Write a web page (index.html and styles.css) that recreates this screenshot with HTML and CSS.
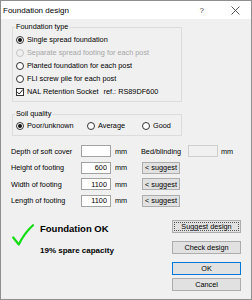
FILE: index.html
```html
<!DOCTYPE html>
<html lang="en">
<head>
  <meta charset="UTF-8">
  <title>Foundation design</title>
  <link rel="stylesheet" href="styles.css">
</head>
<body>
  <div class="window">
    <div class="titlebar">
      <span class="title">Foundation design</span>
      <span class="help">?</span>
      <svg class="close" width="9" height="9" viewBox="0 0 9 9">
        <path d="M0.5 0.5 L8.5 8.5 M8.5 0.5 L0.5 8.5" stroke="#444" stroke-width="0.9" fill="none"/>
      </svg>
    </div>

    <fieldset class="group type-group">
      <legend>Foundation type</legend>
      <label class="opt"><span class="radio checked"></span>Single spread foundation</label>
      <label class="opt disabled"><span class="radio"></span>Separate spread footing for each post</label>
      <label class="opt"><span class="radio"></span>Planted foundation for each post</label>
      <label class="opt"><span class="radio"></span>FLI screw pile for each post</label>
      <label class="opt"><span class="check"><svg width="8" height="8" viewBox="0 0 8 8"><path d="M1.2 4 L3.2 6 L6.8 1.6" stroke="#222" stroke-width="1" fill="none"/></svg></span>NAL Retention Socket<span class="ref">ref.: RS89DF600</span></label>
    </fieldset>

    <fieldset class="group soil-group">
      <legend>Soil quality</legend>
      <div class="soil-row">
        <label class="opt"><span class="radio checked"></span>Poor/unknown</label>
        <label class="opt"><span class="radio"></span>Average</label>
        <label class="opt"><span class="radio"></span>Good</label>
      </div>
    </fieldset>

    <div class="form">
      <span class="lbl">Depth of soft cover</span>
      <input class="num" type="text" value="">
      <span class="unit">mm</span>
      <span class="lbl">Bed/blinding</span>
      <input class="num" type="text" value="" disabled>
      <span class="unit unit-last">mm</span>

      <span class="lbl">Height of footing</span>
      <input class="num" type="text" value="600">
      <span class="unit">mm</span>
      <button class="btn small">&lt; suggest</button>

      <span class="lbl">Width of footing</span>
      <input class="num" type="text" value="1100">
      <span class="unit">mm</span>
      <button class="btn small">&lt; suggest</button>

      <span class="lbl">Length of footing</span>
      <input class="num" type="text" value="1100">
      <span class="unit">mm</span>
      <button class="btn small">&lt; suggest</button>
    </div>

    <div class="bottom">
      <div class="result">
        <svg class="tick" width="22" height="23" viewBox="0 0 22 23">
          <path d="M1.2 13.5 L6.8 20.5 Q12 9.5 21 1.2" stroke="#12dd12" stroke-width="2.2" fill="none" stroke-linecap="round" stroke-linejoin="round"/>
        </svg>
        <div class="result-text">
          <div class="status">Foundation OK</div>
          <div class="spare">19% spare capacity</div>
        </div>
      </div>
      <div class="actions">
        <button class="btn focused">Suggest design</button>
        <button class="btn check-btn">Check design</button>
        <button class="btn ok-btn">OK</button>
        <button class="btn cancel-btn">Cancel</button>
      </div>
    </div>
  </div>
</body>
</html>
```

FILE: styles.css
```css
body {
  margin: 0;
  font-family: "Liberation Sans", Arial, sans-serif;
  font-size: 7.3px;
  color: #000;
}
.window {
  width: 252px;
  height: 300px;
  box-sizing: border-box;
  border: 1px solid #8f8f8f;
  background: #f0f0f0;
}
.titlebar {
  height: 18px;
  background: #fff;
  display: flex;
  align-items: center;
  padding-left: 2px;
}
.title {
  font-size: 8px;
  flex: 1;
}
.help {
  font-size: 8px;
  color: #444;
  margin-right: 27px;
}
.close {
  margin-right: 11px;
}
.group {
  width: 170px;
  box-sizing: border-box;
  margin: 0 0 0 11px;
  border: 1px solid #dcdcdc;
  padding: 1px 3px 3px 3px;
  min-width: 0;
}
.group legend {
  line-height: 10px;
  padding: 0 1px;
  margin-left: -1px;
}
.type-group {
  margin-top: 3px;
}
.soil-group {
  margin-top: 7px;
  padding-top: 0;
}
.opt {
  display: flex;
  align-items: center;
  height: 13px;
  white-space: nowrap;
}
.opt.disabled {
  color: #a6a6a6;
}
.radio {
  width: 8px;
  height: 8px;
  box-sizing: border-box;
  border: 1px solid #333;
  border-radius: 50%;
  background: #fff;
  margin-right: 3px;
  display: flex;
  align-items: center;
  justify-content: center;
}
.radio.checked::after {
  content: "";
  width: 4px;
  height: 4px;
  border-radius: 50%;
  background: #111;
}
.disabled .radio {
  border-color: #c4c4c4;
  background: #f0f0f0;
}
.check {
  width: 8px;
  height: 8px;
  box-sizing: border-box;
  border: 1px solid #333;
  background: #fff;
  margin-right: 3px;
  display: flex;
}
.check svg {
  margin: -1px;
}
.ref {
  margin-left: 5px;
}
.soil-row {
  display: grid;
  grid-template-columns: 71px 55px auto;
}
.form {
  display: grid;
  grid-template-columns: 70px 30px 30px 47px 30px auto;
  grid-auto-rows: 12px;
  row-gap: 4.67px;
  align-items: center;
  margin-top: 9px;
  padding-left: 10px;
}
.lbl {
  grid-column: auto;
  white-space: nowrap;
}
.num {
  width: 30px;
  height: 12px;
  box-sizing: border-box;
  border: 1px solid #a3a3a3;
  background: #fff;
  font: inherit;
  text-align: right;
  padding: 0 3px;
  margin: 0;
}
.num:disabled {
  background: #f0f0f0;
  border-color: #cfcfcf;
}
.unit {
  padding-left: 4px;
}
.unit-last {
  padding-left: 3px;
}
.btn {
  font: inherit;
  color: #000;
  background: #e1e1e1;
  border: 1px solid #adadad;
  margin: 0;
  padding: 0;
  height: 13px;
  box-sizing: border-box;
}
.btn.small {
  grid-column: span 3;
  justify-self: start;
  width: 38px;
  height: 12px;
  margin-left: 1px;
}
.bottom {
  display: flex;
  margin-top: 13px;
}
.result {
  flex: 1;
  display: flex;
  padding-left: 11px;
}
.tick {
  margin-top: 4px;
}
.result-text {
  margin-left: 6px;
}
.status {
  font-weight: bold;
  font-size: 9.5px;
  line-height: 12px;
  margin-top: 3px;
}
.spare {
  font-weight: bold;
  font-size: 8px;
  line-height: 12px;
  margin-top: 10px;
}
.actions {
  width: 69px;
  margin-right: 10px;
  display: flex;
  flex-direction: column;
}
.focused {
  outline: 1px dotted #555;
  outline-offset: -3px;
}
.check-btn {
  margin-top: 8px;
}
.ok-btn {
  margin-top: 8px;
  border-color: #0078d7;
}
.cancel-btn {
  margin-top: 3px;
}
```
